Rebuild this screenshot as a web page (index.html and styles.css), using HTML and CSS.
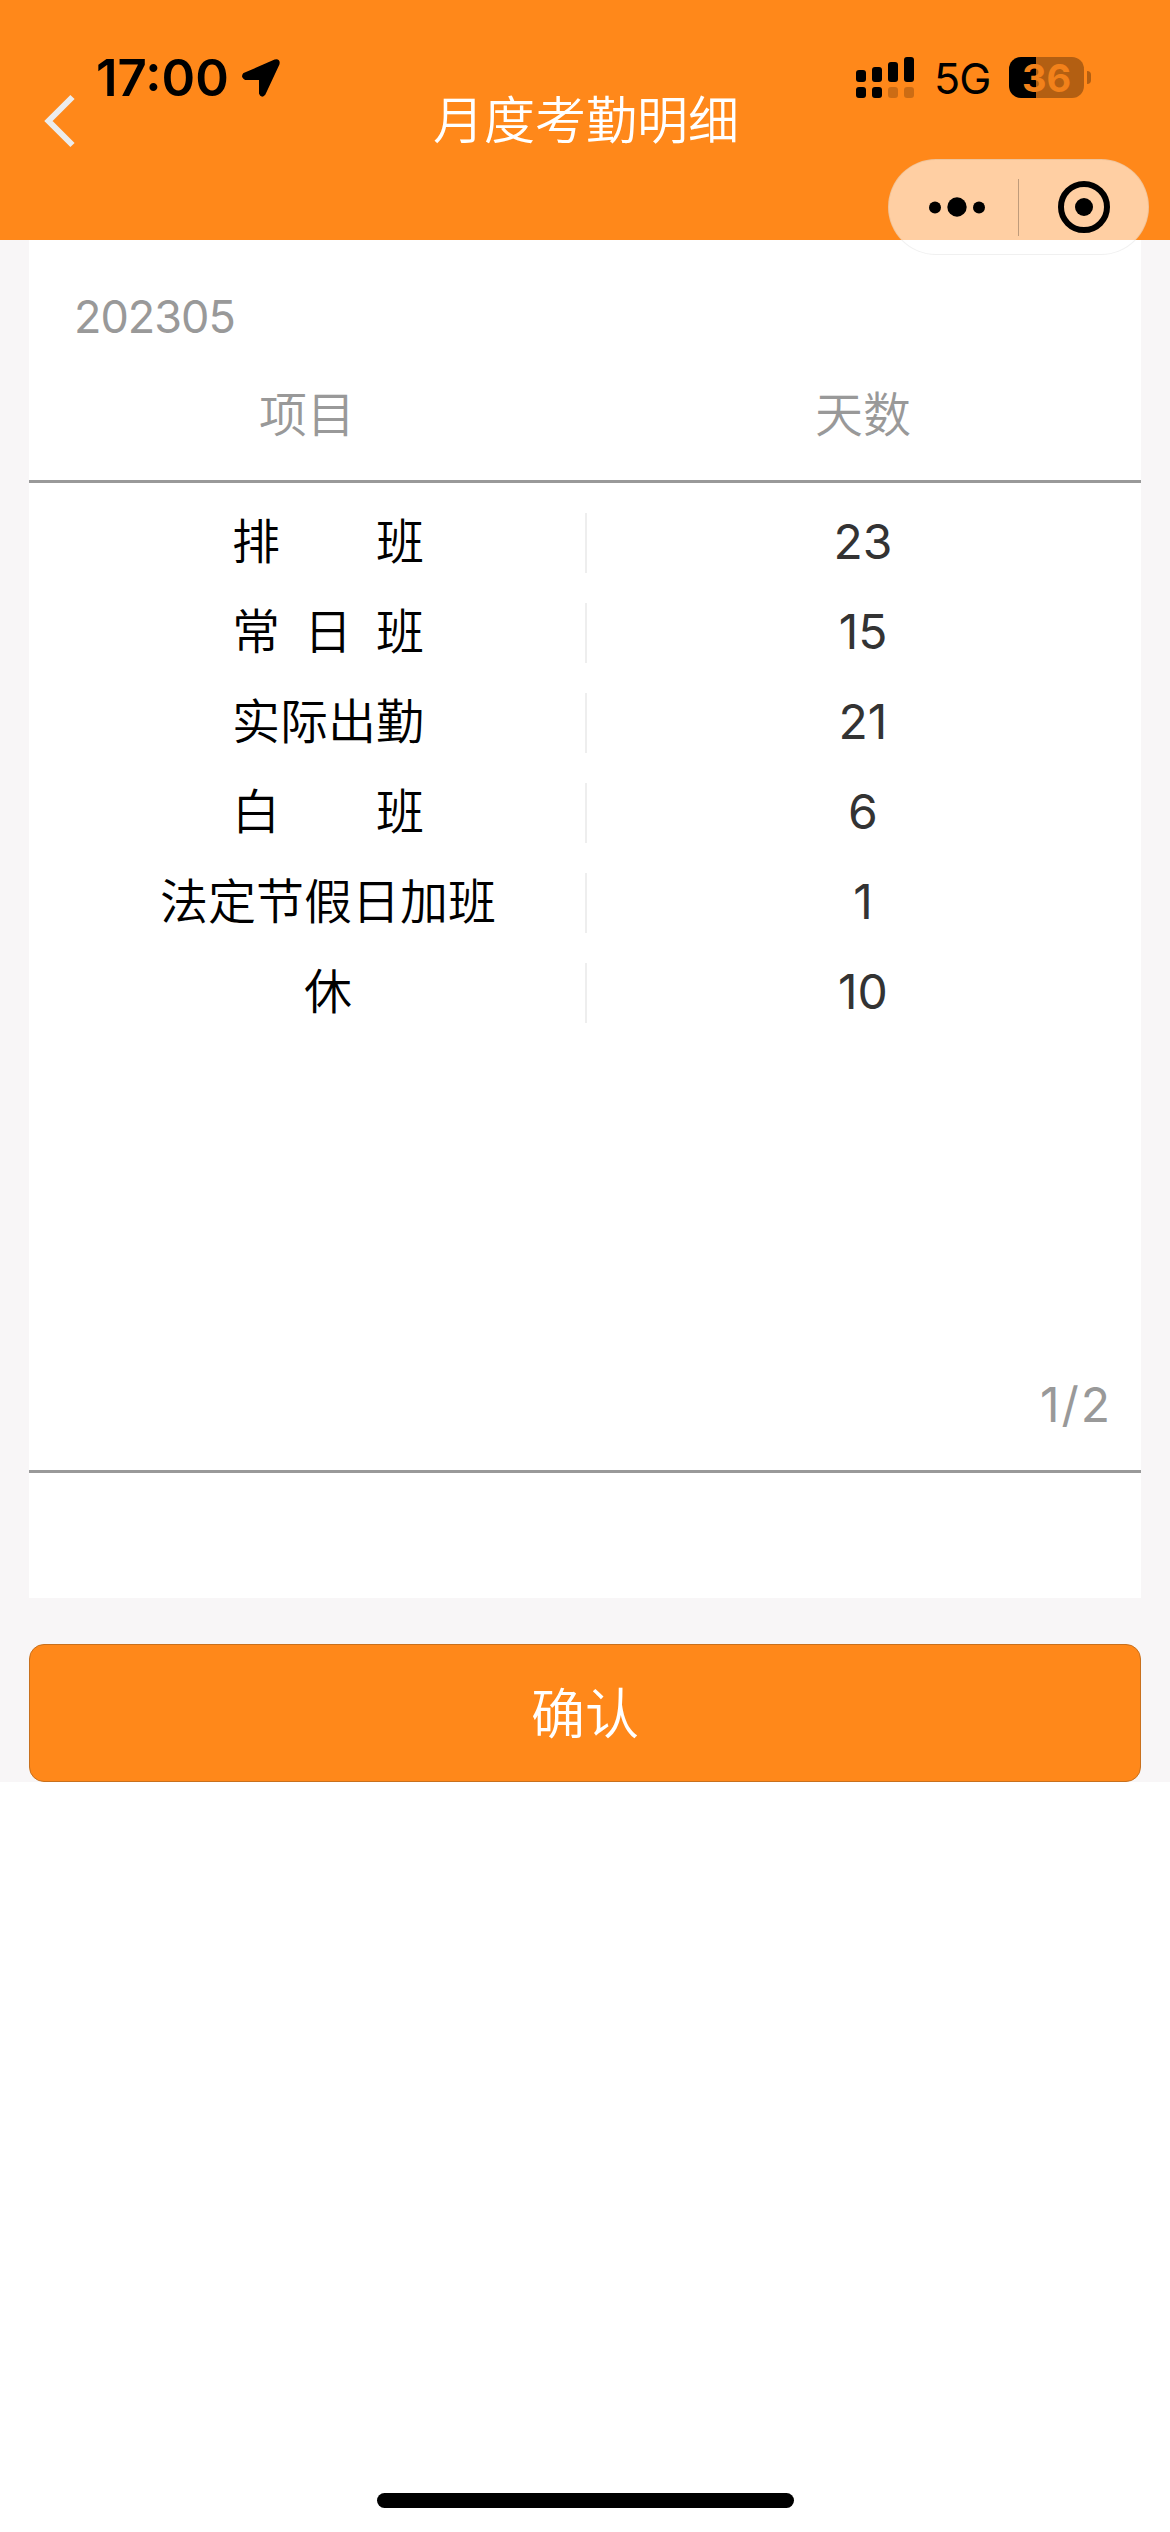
FILE: index.html
```html
<!DOCTYPE html>
<html lang="zh-CN">

<head>
  <meta charset="UTF-8">
  <meta name="viewport" content="width=device-width, initial-scale=1.0">
  <title>月度考勤明细</title>
  <link rel="stylesheet" href="styles.css">
</head>

<body>

  <header class="header">
    <div class="status">
      <div class="status__left">
        <span class="status__time">17:00</span>
        <svg class="status__location" viewBox="0 0 40 40">
          <path d="M3 16 L34 2.500 Q38.500 1.500 37.500 6 L23.500 36 Q20.500 39.500 19 35.500 V21 H4.500 Q0.500 19 3 16 Z" stroke="#000" stroke-width="2" stroke-linejoin="round" />
        </svg>
      </div>
      <div class="status__right">
        <svg class="status__signal" viewBox="0 0 58 41">
          <rect x="0" y="13" width="10" height="12" rx="3" />
          <rect x="16" y="10" width="10" height="15" rx="3" />
          <rect x="32" y="5" width="10" height="20" rx="3" />
          <rect x="48" y="0" width="10" height="25" rx="3" />
          <rect x="0" y="30" width="10" height="11" rx="3" />
          <rect x="16" y="30" width="10" height="11" rx="3" />
          <rect x="32" y="30" width="10" height="11" rx="3" opacity="0.2" />
          <rect x="48" y="30" width="10" height="11" rx="3" opacity="0.2" />
        </svg>
        <span class="status__network">5G</span>
        <div class="battery">
          <span class="battery__body">36</span>
          <span class="battery__tip"></span>
        </div>
      </div>
    </div>
    <nav class="nav">
      <a href="#" class="nav__back">
        <svg viewBox="0 0 32 54">
          <path d="M28.500 3 L4.500 27 L28.500 51" fill="none" stroke="#ececec" stroke-width="6" />
        </svg>
      </a>
      <h1 class="nav__title">月度考勤明细</h1>
    </nav>
    <div class="capsule">
      <svg class="capsule__more" viewBox="0 0 56 20">
        <circle cx="6" cy="10.500" r="6" />
        <circle cx="28" cy="10" r="9.700" />
        <circle cx="50" cy="10.500" r="6" />
      </svg>
      <span class="capsule__line"></span>
      <svg class="capsule__close" viewBox="0 0 52 52">
        <circle cx="26" cy="26" r="23" fill="none" stroke="#000" stroke-width="6" />
        <circle cx="26" cy="26" r="9" />
      </svg>
    </div>
  </header>

  <main class="page">
    <section class="card">
      <div class="card__month">202305</div>
      <div class="card__head">
        <span>项目</span>
        <span>天数</span>
      </div>
      <ul class="list">
        <li class="list__row">
          <span class="list__name">排&#12288;&#12288;班</span>
          <span class="list__days">23</span>
        </li>
        <li class="list__row">
          <span class="list__name list__name_three"><i>常</i><i>日</i><i>班</i></span>
          <span class="list__days">15</span>
        </li>
        <li class="list__row">
          <span class="list__name">实际出勤</span>
          <span class="list__days">21</span>
        </li>
        <li class="list__row">
          <span class="list__name">白&#12288;&#12288;班</span>
          <span class="list__days">6</span>
        </li>
        <li class="list__row">
          <span class="list__name">法定节假日加班</span>
          <span class="list__days">1</span>
        </li>
        <li class="list__row">
          <span class="list__name">休</span>
          <span class="list__days">10</span>
        </li>
      </ul>
      <div class="card__pages">1/2</div>
    </section>
    <button class="confirm" type="button">确认</button>
  </main>

  <div class="home-bar"></div>

</body>
</html>
```

FILE: styles.css
```css
* {
  box-sizing: border-box;
  margin: 0;
  padding: 0;
}

body {
  min-height: 2532px;
  background-color: #fff;
  font-family: Inter, "Noto Sans CJK SC", sans-serif;
  font-size: 48px;
  position: relative;
}

svg {
  display: block;
}

.header {
  position: relative;
  height: 240px;
  background-color: #ff881a;
}

/* status bar */
.status {
  height: 94px;
  padding: 56px 79px 0 96px;
  display: flex;
  justify-content: space-between;
}

.status__left,
.status__right {
  display: flex;
  align-items: center;
  height: 43px;
}

.status__time {
  font-size: 51px;
  font-weight: 600;
  width: 145px;
}

.status__location {
  width: 40px;
  height: 40px;
}

.status__signal {
  width: 58px;
  height: 41px;
  margin-right: 20px;
}

.status__network {
  font-size: 43px;
  width: 75px;
  letter-spacing: -1px;
}

.battery {
  display: flex;
  align-items: center;
}

.battery__body {
  width: 75px;
  height: 41px;
  border-radius: 12px;
  background: linear-gradient(to right, #000 27px, #b35f12 27px);
  color: #f2811a;
  font-size: 38px;
  font-weight: 700;
  line-height: 42px;
  text-align: center;
}

.battery__tip {
  width: 4px;
  height: 13px;
  margin-left: 3px;
  border-radius: 0 4px 4px 0;
  background-color: #b35f12;
}

/* navigation */
.nav {
  height: 54px;
  display: grid;
  grid-template-columns: 160px 1fr 158px;
  align-items: center;
}

.nav__back {
  width: 32px;
  margin-left: 44px;
}

.nav__title {
  color: #fff;
  font-size: 51px;
  font-weight: 350;
  line-height: 54px;
  text-align: center;
}

.capsule {
  position: absolute;
  top: 159px;
  right: 21px;
  width: 261px;
  height: 96px;
  z-index: 2;
  padding: 0 38px 0 40px;
  display: flex;
  align-items: center;
  justify-content: space-between;
  border: 1px solid rgba(0, 0, 0, 0.06);
  border-radius: 48px;
  background-color: rgba(255, 255, 255, 0.6);
}

.capsule__more {
  width: 56px;
  height: 20px;
}

.capsule__line {
  width: 1px;
  height: 57px;
  margin-left: -6px;
  background-color: rgba(0, 0, 0, 0.25);
}

.capsule__close {
  width: 52px;
  height: 52px;
}

/* content */
.page {
  height: 1542px;
  padding: 0 29px;
  background-color: #f8f6f7;
}

.card {
  height: 1358px;
  margin-bottom: 46px;
  background-color: #fff;
  color: #999;
}

.card__month {
  height: 120px;
  padding: 47px 0 0 45px;
  font-size: 45px;
  line-height: 60px;
  letter-spacing: -1px;
}

.card__head {
  height: 123px;
  padding-top: 20px;
  display: grid;
  grid-template-columns: 1fr 1fr;
  border-bottom: 3px solid #999;
  font-weight: 350;
  line-height: 70px;
  text-align: center;
}

.list {
  height: 867px;
  padding-top: 15px;
  list-style: none;
}

.list__row {
  height: 90px;
  padding: 15px 0;
  display: grid;
  grid-template-columns: 1fr 1fr;
  line-height: 58px;
  text-align: center;
}

.list__name {
  margin-right: -2px;
  padding-left: 42px;
  border-right: 2px solid #eee;
  color: #000;
  font-weight: 350;
}

.list__name_three {
  display: flex;
  justify-content: center;
  gap: 24px;
}

.list__name_three i {
  font-style: normal;
}

.list__days {
  color: #333;
}

.card__pages {
  height: 123px;
  padding: 20px 29px 0 0;
  border-bottom: 3px solid #999;
  line-height: 70px;
  letter-spacing: 2px;
  text-align: right;
}

.confirm {
  display: block;
  width: 100%;
  height: 138px;
  padding-bottom: 6px;
  border: 1px solid #c8701d;
  border-radius: 15px;
  background-color: #ff881a;
  color: #fff;
  font-family: inherit;
  font-size: 54px;
  font-weight: 350;
}

.home-bar {
  position: absolute;
  bottom: 24px;
  left: 377px;
  width: 417px;
  height: 15px;
  border-radius: 8px;
  background-color: #000;
}
```
